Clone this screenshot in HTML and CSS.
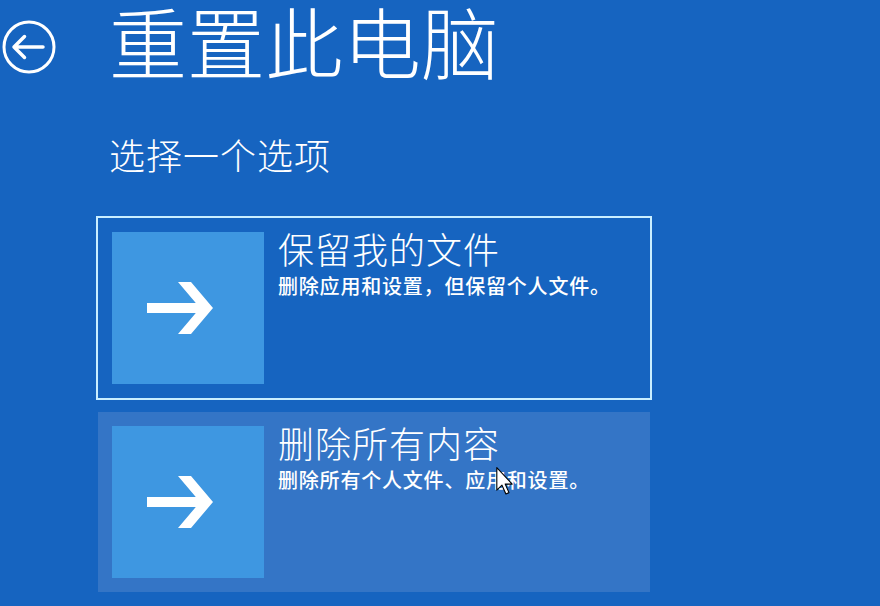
FILE: index.html
```html
<!DOCTYPE html>
<html lang="zh-CN">
<head>
<meta charset="utf-8">
<title>重置此电脑</title>
<link rel="stylesheet" href="styles.css">
</head>
<body>
<div class="page">
  <header class="header">
    <svg class="back" width="56" height="56" viewBox="0 0 56 56" aria-label="返回">
      <circle cx="28" cy="28" r="25" fill="none" stroke="#fff" stroke-width="3"/>
      <path d="M13 28 H42 M23.5 17.5 L13 28 L23.5 38.5" fill="none" stroke="#fff" stroke-width="3.5" stroke-linecap="round" stroke-linejoin="round"/>
    </svg>
    <h1 class="title">重置此电脑</h1>
  </header>
  <p class="subtitle">选择一个选项</p>
  <div class="options">
    <div class="option selected">
      <div class="tile">
        <svg width="66" height="52" viewBox="0 0 66 52"><path d="M31 0 H44 L66 26 L44 52 H31 L48.8 31 H0 V21 H48.8 Z" fill="#fff"/></svg>
      </div>
      <div class="text">
        <div class="opt-title">保留我的文件</div>
        <div class="opt-desc">删除应用和设置，但保留个人文件。</div>
      </div>
    </div>
    <div class="option hover">
      <div class="tile">
        <svg width="66" height="52" viewBox="0 0 66 52"><path d="M31 0 H44 L66 26 L44 52 H31 L48.8 31 H0 V21 H48.8 Z" fill="#fff"/></svg>
      </div>
      <div class="text">
        <div class="opt-title">删除所有内容</div>
        <div class="opt-desc">删除所有个人文件、应用和设置。</div>
      </div>
    </div>
  </div>
  <svg class="cursor" width="17" height="28" viewBox="0 0 12 20"><path d="M0.5 0.5 L0.5 16.5 L4.2 13 L7 19.3 L9.2 18.3 L6.5 12.2 L11.5 12.2 Z" fill="#fff" stroke="#000" stroke-width="0.8" stroke-linejoin="round"/></svg>
</div>
</body>
</html>
```
FILE: styles.css
```css
html, body {
  margin: 0;
  padding: 0;
  background: #1664c0;
  width: 880px;
  height: 606px;
  overflow: hidden;
}
.page {
  position: relative;
  height: 606px;
  font-family: "Noto Sans CJK SC", "Noto Sans", sans-serif;
  color: #fff;
}
.header {
  display: flex;
  align-items: flex-start;
  padding-top: 1px;
}
.back {
  display: block;
  margin-left: 1px;
  margin-top: 18px;
}
.title {
  margin: 0 0 0 52px;
  font-size: 78px;
  line-height: 78px;
  font-weight: 300;
}
.subtitle {
  margin: 57px 0 0 109px;
  font-size: 36px;
  line-height: 36px;
  letter-spacing: 1px;
  font-weight: 300;
}
.options {
  margin: 44px 0 0 96px;
  display: flex;
  flex-direction: column;
  gap: 10px;
  width: 556px;
}
.option {
  display: flex;
  align-items: flex-start;
  box-sizing: border-box;
  height: 184px;
  padding: 14px;
  border: 2px solid transparent;
  background-clip: padding-box;
}
.option.selected {
  border-color: #c9eeff;
}
.option.hover {
  background-color: #3475c6;
}
.tile {
  width: 152px;
  height: 152px;
  flex: none;
  background: #3e97e1;
  display: flex;
  align-items: center;
  justify-content: center;
}
.tile svg {
  display: block;
  margin-left: -16px;
}
.text {
  margin-left: 14px;
  margin-top: -6px;
}
.opt-title {
  font-size: 36px;
  line-height: 44px;
  letter-spacing: 1px;
  font-weight: 300;
}
.opt-desc {
  margin-top: 4px;
  font-size: 20px;
  line-height: 24px;
  letter-spacing: 0.8px;
  font-weight: 500;
}
.cursor {
  position: absolute;
  left: 496px;
  top: 467px;
}
```
